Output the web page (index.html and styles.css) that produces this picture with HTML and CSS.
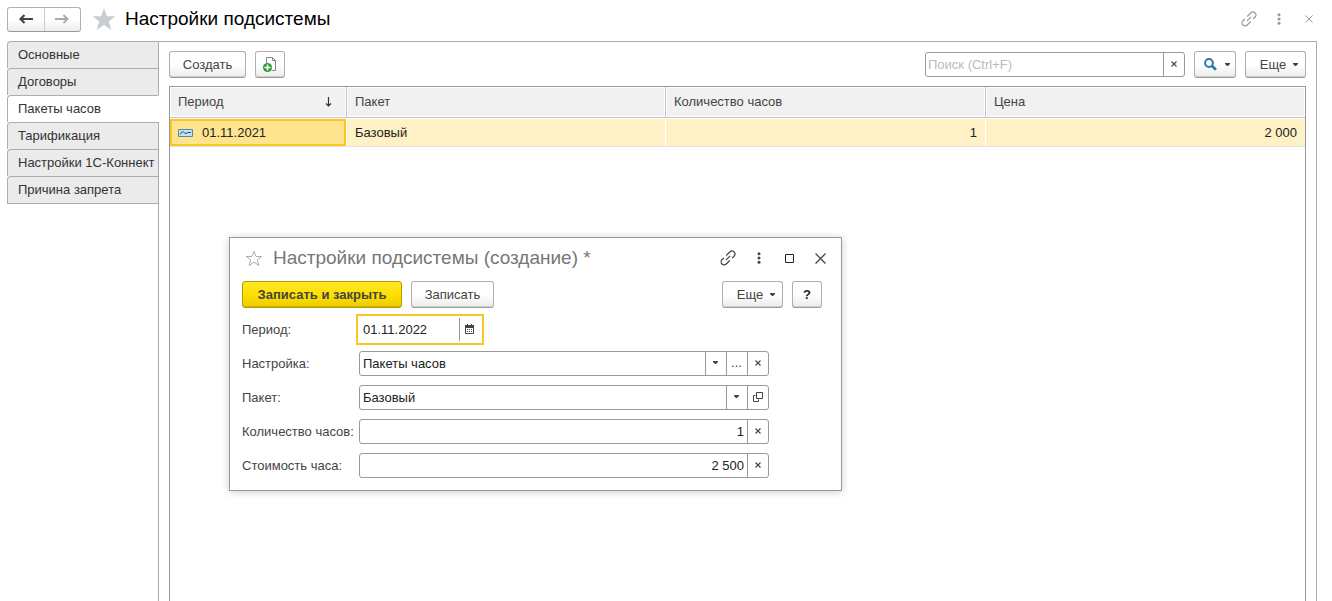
FILE: index.html
```html
<!DOCTYPE html>
<html lang="ru">
<head>
<meta charset="utf-8">
<title>Настройки подсистемы</title>
<link rel="stylesheet" href="styles.css">
</head>
<body>
<svg class="sprite" aria-hidden="true">
  <symbol id="link" viewBox="0 0 16 16"><g transform="rotate(-45 8 8)" fill="none" stroke="currentColor" stroke-width="1.2"><path d="M8.500 5H13.500a3 3 0 0 1 0 6H11M7.500 11H2.500a3 3 0 0 1 0-6H5M5 8h6"/></g></symbol>
  <symbol id="dots" viewBox="0 0 4 12"><g fill="currentColor"><circle cx="2" cy="1.800" r="1.500"/><circle cx="2" cy="6" r="1.500"/><circle cx="2" cy="10.200" r="1.500"/></g></symbol>
  <symbol id="cross" viewBox="0 0 10 10"><path d="M.5.5l9 9M9.500.5l-9 9" fill="none" stroke="currentColor" stroke-width="1.200"/></symbol>
  <symbol id="small-cross" viewBox="0 0 6 6"><path d="M.5.5l5 5M5.500.5l-5 5" fill="none" stroke="currentColor" stroke-width="1.100"/></symbol>
  <symbol id="caret" viewBox="0 0 5 3"><path d="M0 0h5v1L3 3H2L0 1z" fill="currentColor"/></symbol>
</svg>

<header class="page-header">
  <div class="history">
    <button type="button" aria-label="Назад"><svg width="14" height="10" viewBox="0 0 14 10"><path d="M5.500 1L1.500 5l4 4M2 5h12" fill="none" stroke="#444" stroke-width="2.200"/></svg></button>
    <button type="button" aria-label="Вперед"><svg width="14" height="10" viewBox="0 0 14 10"><path d="M8.500 1l4 4-4 4M12 5H0" fill="none" stroke="#aaa" stroke-width="1.800"/></svg></button>
  </div>
  <button type="button" class="bare" aria-label="В избранное"><svg width="24" height="22" viewBox="0 0 24 22"><path fill="#c9cccf" d="M12 0l2.900 8.200H23.500l-6.800 5.200 2.700 8.600L12 16.800 4.600 22l2.700-8.600L.5 8.200h8.600z"/></svg></button>
  <h1>Настройки подсистемы</h1>
  <div class="window-tools page-tools">
    <button type="button" class="bare" aria-label="Ссылка"><svg width="16" height="16"><use href="#link"/></svg></button>
    <button type="button" class="bare" aria-label="Меню"><svg width="4" height="12"><use href="#dots"/></svg></button>
    <button type="button" class="bare" aria-label="Закрыть"><svg width="8" height="8"><use href="#cross"/></svg></button>
  </div>
</header>

<div class="workspace">
  <nav class="tabs">
    <a href="#">Основные</a>
    <a href="#">Договоры</a>
    <a href="#" class="active" aria-current="page">Пакеты часов</a>
    <a href="#">Тарификация</a>
    <a href="#">Настройки 1С-Коннект</a>
    <a href="#">Причина запрета</a>
    <span class="tabs-rest"></span>
  </nav>

  <main class="content">
    <div class="toolbar">
      <button type="button" class="btn create">Создать</button>
      <button type="button" class="btn square" aria-label="Создать копированием"><svg width="16" height="17" viewBox="0 0 16 17"><path d="M4.500 7V1.500h6l3 3v10h-4" fill="#fff" stroke="#7c8794"/><path d="M10.500 1.500v3h3" fill="none" stroke="#7c8794"/><circle cx="5.500" cy="11.500" r="4.500" fill="#2b9a35"/><path d="M5.500 8.500v6M2.500 11.500h6" stroke="#fff" stroke-width="1.500"/></svg></button>
      <div class="field search">
        <input type="text" placeholder="Поиск (Ctrl+F)" aria-label="Поиск">
        <button type="button" aria-label="Очистить"><svg width="6" height="6"><use href="#small-cross"/></svg></button>
      </div>
      <button type="button" class="btn find" aria-label="Найти"><svg width="13" height="13" viewBox="0 0 13 13"><circle cx="5" cy="5" r="3.900" fill="none" stroke="#2d77ad" stroke-width="2"/><path d="M7.800 7.800l4.200 4" stroke="#2d77ad" stroke-width="2.600"/></svg><svg width="5" height="3"><use href="#caret"/></svg></button>
      <button type="button" class="btn more">Еще<svg width="5" height="3"><use href="#caret"/></svg></button>
    </div>

    <div class="grid">
      <table>
        <colgroup><col class="c-period"><col class="c-pack"><col class="c-hours"><col></colgroup>
        <thead>
          <tr>
            <th><div class="sorted">Период<svg width="7" height="10" viewBox="0 0 7 10"><path d="M3.500 0v9M1 6.500L3.500 9 6 6.500" fill="none" stroke="#333" stroke-width="1.200"/></svg></div></th>
            <th>Пакет</th><th>Количество часов</th><th>Цена</th>
          </tr>
        </thead>
        <tbody>
          <tr>
            <td class="current"><div class="record"><svg width="15" height="8" viewBox="0 0 15 8"><path d="M.5.5h14v7H.5z" fill="#c5dff3" stroke="#5986ab"/><path d="M2 5.500Q4 1.500 5.500 3T8 4.500Q9.500 3 13 3.500" fill="none" stroke="#24527e"/></svg>01.11.2021</div></td>
            <td>Базовый</td><td class="num">1</td><td class="num">2 000</td>
          </tr>
        </tbody>
      </table>
    </div>
  </main>
</div>

<section class="dialog" role="dialog" aria-labelledby="dialog-title">
  <div class="dialog-header">
    <button type="button" class="bare" aria-label="В избранное"><svg width="18" height="17" viewBox="0 0 18 17"><path fill="none" stroke="#a5adb5" d="M9 1.300l2 5.200h5.700l-4.500 3.400 1.700 5.600L9 12.100l-4.900 3.400 1.700-5.600L1.300 6.500H7z"/></svg></button>
    <h2 id="dialog-title">Настройки подсистемы (создание) *</h2>
    <div class="window-tools dialog-tools">
      <button type="button" class="bare" aria-label="Ссылка"><svg width="16" height="16"><use href="#link"/></svg></button>
      <button type="button" class="bare" aria-label="Меню"><svg width="4" height="12"><use href="#dots"/></svg></button>
      <button type="button" class="bare" aria-label="Развернуть"><svg width="9" height="9" viewBox="0 0 9 9"><path d="M.5.5h8v8h-8z" fill="none" stroke="#222"/></svg></button>
      <button type="button" class="bare" aria-label="Закрыть"><svg width="11" height="11"><use href="#cross"/></svg></button>
    </div>
  </div>
  <div class="dialog-actions">
    <button type="button" class="btn primary">Записать и закрыть</button>
    <button type="button" class="btn save">Записать</button>
    <button type="button" class="btn more push">Еще<svg width="5" height="3"><use href="#caret"/></svg></button>
    <button type="button" class="btn square help">?</button>
  </div>
  <form class="form">
    <div class="row">
      <label for="period">Период:</label>
      <div class="date">
        <input id="period" type="text" value="01.11.2022">
        <button type="button" aria-label="Выбрать дату"><svg width="9" height="10" viewBox="0 0 9 10"><path d="M.5 1.500h8v8h-8z" fill="#fff" stroke="#444"/><path d="M0 1h9v3H0zM2 0h1v1H2zM6 0h1v1H6z" fill="#444"/><path d="M2 5.500h5M2 7.500h5" stroke="#444" stroke-dasharray="1 1"/></svg></button>
      </div>
    </div>
    <div class="row">
      <label for="setting">Настройка:</label>
      <div class="field">
        <input id="setting" type="text" value="Пакеты часов">
        <button type="button" aria-label="Список"><svg width="5" height="3"><use href="#caret"/></svg></button>
        <button type="button" aria-label="Выбрать">...</button>
        <button type="button" aria-label="Очистить"><svg width="6" height="6"><use href="#small-cross"/></svg></button>
      </div>
    </div>
    <div class="row">
      <label for="pack">Пакет:</label>
      <div class="field">
        <input id="pack" type="text" value="Базовый">
        <button type="button" aria-label="Список"><svg width="5" height="3"><use href="#caret"/></svg></button>
        <button type="button" aria-label="Открыть"><svg width="10" height="10" viewBox="0 0 10 10"><path d="M3.500.5h6v6h-6zM2.500 3.500h-2v6h5v-2" fill="none" stroke="#444"/></svg></button>
      </div>
    </div>
    <div class="row">
      <label for="hours">Количество часов:</label>
      <div class="field">
        <input id="hours" class="num" type="text" value="1">
        <button type="button" aria-label="Очистить"><svg width="6" height="6"><use href="#small-cross"/></svg></button>
      </div>
    </div>
    <div class="row">
      <label for="cost">Стоимость часа:</label>
      <div class="field">
        <input id="cost" class="num" type="text" value="2 500">
        <button type="button" aria-label="Очистить"><svg width="6" height="6"><use href="#small-cross"/></svg></button>
      </div>
    </div>
  </form>
</section>
</body>
</html>
```
FILE: styles.css
```css
* { box-sizing: border-box; }

body {
  margin: 0;
  height: 100vh;
  display: flex;
  flex-direction: column;
  overflow: hidden;
  background: #fff;
  color: #333;
  font: 13px/16px "Liberation Sans", Arial, sans-serif;
}

button, input {
  margin: 0;
  padding: 0;
  border: 0;
  background: none;
  color: inherit;
  font: inherit;
}

svg { display: block; flex: none; }
.sprite { position: absolute; width: 0; height: 0; }
h1, h2 { margin: 0; font-weight: 400; white-space: nowrap; }
.bare { display: flex; justify-content: center; align-items: center; }

/* Header */
.page-header {
  flex: none;
  display: flex;
  align-items: center;
  height: 41px;
  padding: 0 8px 3px 7px;
}
.history {
  display: flex;
  width: 74px;
  height: 25px;
  margin-right: 11px;
  border: 1px solid #b0b0b0;
  border-bottom-color: #999;
  border-radius: 3px;
  background: linear-gradient(#fff 50%, #ececec);
}
.history button { flex: 1; display: flex; align-items: center; justify-content: center; }
.history button + button { border-left: 1px solid #ccc; }
h1 { margin-left: 9px; color: #000; font-size: 19px; line-height: 24px; }
.window-tools { display: flex; align-items: center; margin-left: auto; }
.window-tools .bare { width: 30px; height: 20px; }
.page-tools { color: #999; }
.dialog-tools { color: #444; }

/* Section tabs */
.workspace { flex: 1; display: flex; min-height: 0; padding: 0 15px 0 7px; }
.tabs { flex: none; display: flex; flex-direction: column; width: 152px; }
.tabs a {
  height: 27px;
  padding: 5px 0 0 10px;
  border: solid #adadad;
  border-width: 1px 1px 0;
  border-radius: 4px 0 0 0;
  background: #ebebeb;
  color: #333;
  text-decoration: none;
  white-space: nowrap;
}
.tabs .active { background: #fff; border-right-color: #fff; }
.tabs-rest { flex: 1; border: solid #adadad; border-width: 1px 1px 0 0; }

.content {
  flex: 1;
  min-width: 0;
  display: flex;
  flex-direction: column;
  padding: 9px 10px 0;
  border: solid #adadad;
  border-width: 1px 1px 0 0;
}

/* Buttons */
.toolbar { display: flex; align-items: center; gap: 9px; margin-bottom: 8px; }
.btn {
  display: flex;
  align-items: center;
  justify-content: center;
  height: 27px;
  border: 1px solid #b0b0b0;
  border-bottom-color: #999;
  border-radius: 3px;
  background: linear-gradient(#fff 50%, #ebebeb);
  box-shadow: inset 0 -1px #d0d0d0;
  color: #444;
}
.create { width: 77px; }
.square { width: 30px; }
.find { width: 42px; gap: 8px; }
.find svg + svg { margin-right: -4px; }
.more { width: 61px; gap: 7px; padding-left: 7px; }
.save { width: 83px; }
.help { color: #222; font-weight: 700; }
.primary {
  width: 160px;
  border-color: #b39c00;
  background: linear-gradient(#ffe82a, #ffe000 50%, #ebcc00);
  box-shadow: inset 0 -1px #d0b400;
  font-weight: 700;
}
.push { margin-left: auto; }

/* Fields */
.field {
  flex: 1;
  min-width: 0;
  display: flex;
  height: 25px;
  border: 1px solid #999;
  border-radius: 3px;
  background: #fff;
}
.field input, .date input { flex: 1; min-width: 0; padding: 0 3px; outline: 0; color: #222; }
.field button {
  flex: none;
  width: 21px;
  display: flex;
  align-items: center;
  justify-content: center;
  padding: 0 1px 2px 0;
  border-left: 1px solid #999;
  color: #444;
}
.search { flex: 0 1 260px; margin-left: auto; }
.search input { padding-left: 2px; }
.search input::placeholder { color: #bbb; opacity: 1; }
.num, .field .num { text-align: right; }

/* List */
.grid { flex: 1; border: 1px solid #999; border-bottom: 0; }
table { width: 100%; table-layout: fixed; border-collapse: separate; border-spacing: 0; }
.c-period { width: 177px; }
.c-pack { width: 319px; }
.c-hours { width: 320px; }
th {
  height: 31px;
  padding: 0 8px;
  border-right: 1px solid #c4c4c8;
  border-bottom: 1px solid #c4c4c8;
  background: #f1f1f1;
  box-shadow: inset 0 0 0 1px #fff;
  color: #444;
  font-weight: 400;
  text-align: left;
}
th:last-child, td:last-child { border-right: 0; }
td {
  height: 28px;
  padding: 0 8px;
  border: solid #fff;
  border-width: 1px 1px 0 0;
  background: #fdf1c5;
  color: #222;
}
tbody tr { box-shadow: 0 1px #e2e2e2; }
.sorted { display: flex; align-items: center; justify-content: space-between; padding-right: 6px; }
.record { display: flex; align-items: center; gap: 9px; }
.current { background: #ffe48f; box-shadow: inset 0 0 0 2px #f8c71f; }

/* Dialog */
.dialog {
  position: absolute;
  left: 229px;
  top: 237px;
  width: 613px;
  padding: 6px 19px 12px 12px;
  border: 1px solid #999;
  background: #fff;
  box-shadow: 0 1px 8px rgba(0, 0, 0, .2);
}
.dialog-header { display: flex; align-items: center; height: 28px; padding-left: 3px; }
h2 { margin-left: 10px; color: #777; font-size: 19px; line-height: 24px; }
.dialog-tools { margin-right: -14px; }
.dialog-tools .bare { width: 31px; }
.dialog-actions { display: flex; gap: 9px; margin-top: 9px; }
.form { display: grid; gap: 9px; margin-top: 9px; padding-right: 53px; }
.row { display: flex; align-items: center; height: 25px; }
.row label { flex: none; width: 117px; color: #444; white-space: nowrap; }
.date {
  flex: none;
  display: flex;
  width: 128px;
  height: 31px;
  margin-left: -3px;
  padding: 2px;
  border: 2px solid #f8c71f;
}
.date button {
  flex: none;
  width: 21px;
  display: flex;
  align-items: center;
  justify-content: center;
  padding: 0 1px 2px 0;
  border-left: 1px solid #999;
}
```
